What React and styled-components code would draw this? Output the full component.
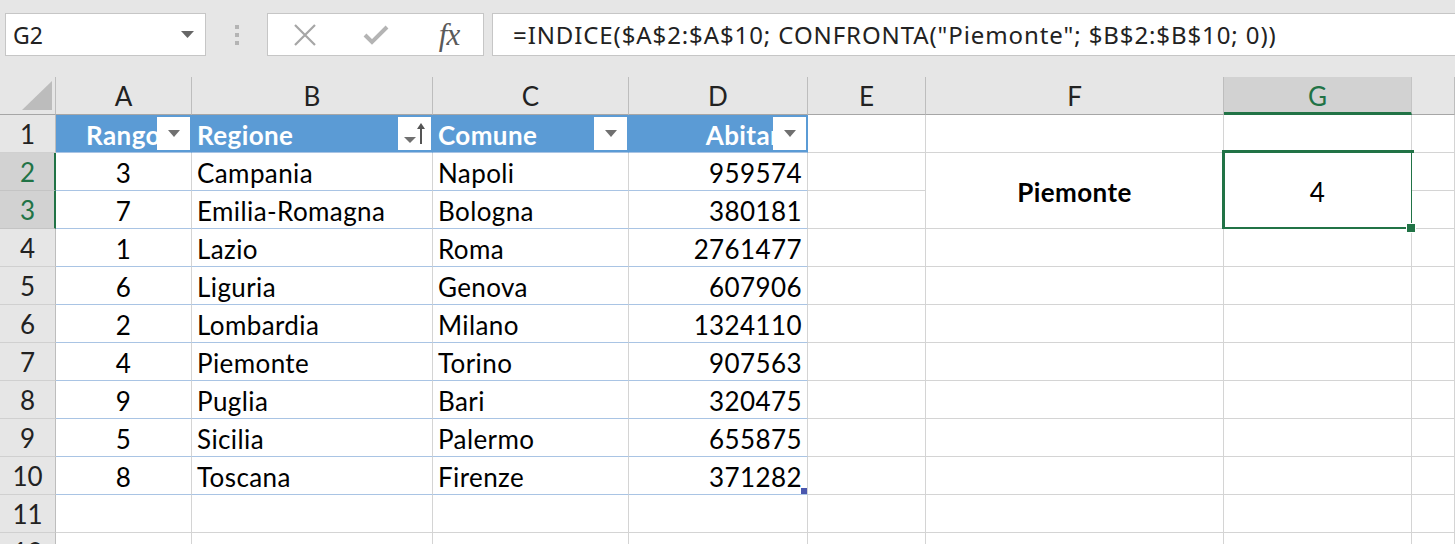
import React from 'react';
import styled, { createGlobalStyle } from 'styled-components';

const GREEN = '#217346';
const GRID = '#d4d4d4';
const TABLE_LINE = '#a9c4e4';
const HEAD_LINE = '#bdbdbd';

const Global = createGlobalStyle`
  html, body {
    margin: 0;
    padding: 0;
    background: #e6e6e6;
    overflow: hidden;
    font-family: Lato, "Noto Sans", sans-serif;
  }
`;

const Page = styled.div`
  width: 1455px;
  height: 544px;
  overflow: hidden;
  background: #ffffff;
`;

// ---- formula bar ----
const Toolbar = styled.div`
  height: 77px;
  background: #e6e6e6;
  display: flex;
  align-items: flex-start;
  padding: 13px 0 0 5px;
  box-sizing: border-box;
`;

const NameBox = styled.div`
  width: 201px;
  height: 43px;
  box-sizing: border-box;
  background: #fff;
  border: 1px solid #c6c6c6;
  display: flex;
  align-items: center;
  justify-content: space-between;
  padding: 0 11px 0 7px;
  font-family: "Noto Sans", "Open Sans", sans-serif;
  font-size: 23px;
  color: #222;
`;

const Grip = styled.div`
  width: 61px;
  height: 43px;
  display: flex;
  flex-direction: column;
  align-items: center;
  justify-content: center;
  gap: 4px;
  span {
    width: 4px;
    height: 4px;
    background: #b4b4b4;
  }
`;

const ButtonBox = styled.div`
  width: 217px;
  height: 43px;
  box-sizing: border-box;
  background: #fff;
  border: 1px solid #c6c6c6;
  display: flex;
  align-items: center;
  padding: 0 0 0 25px;
`;

const IconSlot = styled.div`
  width: ${(p) => p.$w}px;
  display: flex;
  align-items: center;
  justify-content: ${(p) => p.$justify || 'flex-start'};
`;

const Fx = styled.span`
  font-family: "Liberation Serif", serif;
  font-style: italic;
  font-size: 31px;
  line-height: 1;
  color: #5a5a5a;
  letter-spacing: -1px;
`;

const FormulaBox = styled.div`
  flex: 1;
  margin-left: 8px;
  height: 43px;
  box-sizing: border-box;
  background: #fff;
  border: 1px solid #c6c6c6;
  border-right: none;
  display: flex;
  align-items: center;
  padding-left: 20px;
  font-family: "Noto Sans", "Open Sans", sans-serif;
  font-size: 24px;
  letter-spacing: 0.9px;
  color: #222;
  white-space: nowrap;
`;

// ---- sheet ----
const Sheet = styled.div`
  display: grid;
  grid-template-columns: 56px 136px 241px 196px 179px 118px 298px 188px 1fr;
  grid-auto-rows: 38px;
  background: #fff;
`;

const Corner = styled.div`
  background: #e6e6e6;
  border-right: 1px solid ${HEAD_LINE};
  border-bottom: 1px solid #a6a6a6;
  display: flex;
  align-items: flex-end;
  justify-content: flex-end;
  padding: 0 3px 4px 0;
  box-sizing: border-box;
`;

const ColHead = styled.div`
  background: ${(p) => (p.$active ? '#d2d2d2' : '#e6e6e6')};
  color: ${(p) => (p.$active ? GREEN : '#222')};
  border-right: 1px solid ${(p) => (p.$active ? '#c4c4c4' : HEAD_LINE)};
  border-bottom: ${(p) => (p.$active ? `3px solid ${GREEN}` : '1px solid #a6a6a6')};
  display: flex;
  align-items: center;
  justify-content: center;
  font-size: 26px;
  box-sizing: border-box;
  padding-top: ${(p) => (p.$active ? '2px' : '0')};
`;

const RowHead = styled.div`
  background: ${(p) => (p.$active ? '#d2d2d2' : '#e6e6e6')};
  color: ${(p) => (p.$active ? GREEN : '#222')};
  border-right: ${(p) => (p.$active ? `2px solid ${GREEN}` : `1px solid ${HEAD_LINE}`)};
  border-bottom: 1px solid ${(p) => (p.$active ? '#c4c4c4' : '#d0d0d0')};
  display: flex;
  align-items: center;
  justify-content: center;
  font-size: 26px;
  box-sizing: border-box;
  padding-left: ${(p) => (p.$active ? '1px' : '0')};
`;

const Cell = styled.div`
  position: relative;
  box-sizing: border-box;
  background: ${(p) => (p.$blue ? '#5b9bd5' : '#fff')};
  color: ${(p) => (p.$blue ? '#fff' : '#000')};
  font-weight: ${(p) => (p.$bold ? 700 : 400)};
  border-right: 1px solid ${(p) => (p.$blue ? '#5b9bd5' : GRID)};
  border-bottom: 1px solid ${(p) => (p.$table ? TABLE_LINE : GRID)};
  display: flex;
  align-items: center;
  justify-content: ${(p) =>
    p.$align === 'right' ? 'flex-end' : p.$align === 'center' ? 'center' : 'flex-start'};
  padding: 2px 5px 0 5px;
  font-size: 26px;
  letter-spacing: 0.4px;
  white-space: nowrap;
  overflow: hidden;
  grid-row: ${(p) => (p.$span ? `span ${p.$span}` : 'auto')};
`;

const SelectedCell = styled(Cell)`
  overflow: visible;
  &::after {
    content: '';
    position: absolute;
    left: -2px;
    top: -3px;
    right: -3px;
    bottom: -2px;
    border: 3px solid ${GREEN};
    pointer-events: none;
  }
  &::before {
    content: '';
    position: absolute;
    right: -5px;
    bottom: -5px;
    width: 8px;
    height: 8px;
    background: ${GREEN};
    border: 1px solid #fff;
    z-index: 2;
  }
`;

const FilterButton = styled.div`
  position: absolute;
  right: 1px;
  top: 2px;
  width: 33px;
  height: 33px;
  background: #fff;
  display: flex;
  align-items: center;
  justify-content: center;
`;

const ResizeHandle = styled.div`
  position: absolute;
  right: 0;
  bottom: 0;
  width: 6px;
  height: 6px;
  background: #4a57ae;
`;

const Triangle = ({ color = '#707070', w = 12, h = 7 }) => (
  <svg width={w} height={h} viewBox={`0 0 ${w} ${h}`}>
    <polygon points={`0,0 ${w},0 ${w / 2},${h}`} fill={color} />
  </svg>
);

const SortIcon = () => (
  <svg width="26" height="26" viewBox="0 0 26 26">
    <polygon points="2,16 14,16 8,22" fill="#707070" />
    <path d="M19 23 V5" stroke="#555" strokeWidth="2" fill="none" />
    <polygon points="15,8 19,2 23,8" fill="#555" />
  </svg>
);

const data = [
  [3, 'Campania', 'Napoli', 959574],
  [7, 'Emilia-Romagna', 'Bologna', 380181],
  [1, 'Lazio', 'Roma', 2761477],
  [6, 'Liguria', 'Genova', 607906],
  [2, 'Lombardia', 'Milano', 1324110],
  [4, 'Piemonte', 'Torino', 907563],
  [9, 'Puglia', 'Bari', 320475],
  [5, 'Sicilia', 'Palermo', 655875],
  [8, 'Toscana', 'Firenze', 371282],
];

const letters = ['A', 'B', 'C', 'D', 'E', 'F', 'G', ''];

const App = () => {
  const cells = [];

  // column header row
  cells.push(
    <Corner key="corner">
      <svg width="30" height="29" viewBox="0 0 30 29">
        <polygon points="0,29 30,29 30,0" fill="#bcbcbc" />
      </svg>
    </Corner>
  );
  letters.forEach((l, i) =>
    cells.push(
      <ColHead key={'h' + i} $active={l === 'G'}>
        {l}
      </ColHead>
    )
  );

  // row 1: table header
  cells.push(<RowHead key="r1">1</RowHead>);
  cells.push(
    <Cell key="1a" $blue $bold $table $align="center">
      Rango
      <FilterButton>
        <Triangle />
      </FilterButton>
    </Cell>
  );
  cells.push(
    <Cell key="1b" $blue $bold $table>
      Regione
      <FilterButton>
        <SortIcon />
      </FilterButton>
    </Cell>
  );
  cells.push(
    <Cell key="1c" $blue $bold $table>
      Comune
      <FilterButton>
        <Triangle />
      </FilterButton>
    </Cell>
  );
  cells.push(
    <Cell key="1d" $blue $bold $table $align="right">
      Abitanti
      <FilterButton>
        <Triangle />
      </FilterButton>
    </Cell>
  );
  cells.push(<Cell key="1e" />, <Cell key="1f" />, <Cell key="1g" />, <Cell key="1h" />);

  // rows 2..10: data
  data.forEach((row, i) => {
    const n = i + 2;
    cells.push(
      <RowHead key={'r' + n} $active={n === 2 || n === 3}>
        {n}
      </RowHead>
    );
    cells.push(
      <Cell key={n + 'a'} $table $align="center">
        {row[0]}
      </Cell>
    );
    cells.push(
      <Cell key={n + 'b'} $table>
        {row[1]}
      </Cell>
    );
    cells.push(
      <Cell key={n + 'c'} $table>
        {row[2]}
      </Cell>
    );
    cells.push(
      <Cell key={n + 'd'} $table $align="right">
        {row[3]}
        {n === 10 && <ResizeHandle />}
      </Cell>
    );
    cells.push(<Cell key={n + 'e'} />);
    if (n === 2) {
      cells.push(
        <Cell key="2f" $span={2} $bold $align="center">
          Piemonte
        </Cell>
      );
      cells.push(
        <SelectedCell key="2g" $span={2} $align="center">
          4
        </SelectedCell>
      );
    } else if (n > 3) {
      cells.push(<Cell key={n + 'f'} />, <Cell key={n + 'g'} />);
    }
    cells.push(<Cell key={n + 'h'} />);
  });

  // empty rows 11, 12
  [11, 12].forEach((n) => {
    cells.push(<RowHead key={'r' + n}>{n}</RowHead>);
    ['a', 'b', 'c', 'd', 'e', 'f', 'g', 'h'].forEach((c) => cells.push(<Cell key={n + c} />));
  });

  return (
    <Page>
      <Global />
      <Toolbar>
        <NameBox>
          G2
          <Triangle color="#666" w={13} h={7} />
        </NameBox>
        <Grip>
          <span />
          <span />
          <span />
        </Grip>
        <ButtonBox>
          <IconSlot $w={70}>
            <svg width="24" height="24" viewBox="0 0 24 24">
              <path d="M2 2 L22 22 M22 2 L2 22" stroke="#a6a6a6" strokeWidth="2.2" />
            </svg>
          </IconSlot>
          <IconSlot $w={66}>
            <svg width="26" height="22" viewBox="0 0 26 22">
              <path d="M2 11 L9 18 L24 3" stroke="#b4b4b4" strokeWidth="4" fill="none" />
            </svg>
          </IconSlot>
          <IconSlot $w={40} $justify="center">
            <Fx>fx</Fx>
          </IconSlot>
        </ButtonBox>
        <FormulaBox>=INDICE($A$2:$A$10; CONFRONTA("Piemonte"; $B$2:$B$10; 0))</FormulaBox>
      </Toolbar>
      <Sheet>{cells}</Sheet>
    </Page>
  );
};

export default App;
